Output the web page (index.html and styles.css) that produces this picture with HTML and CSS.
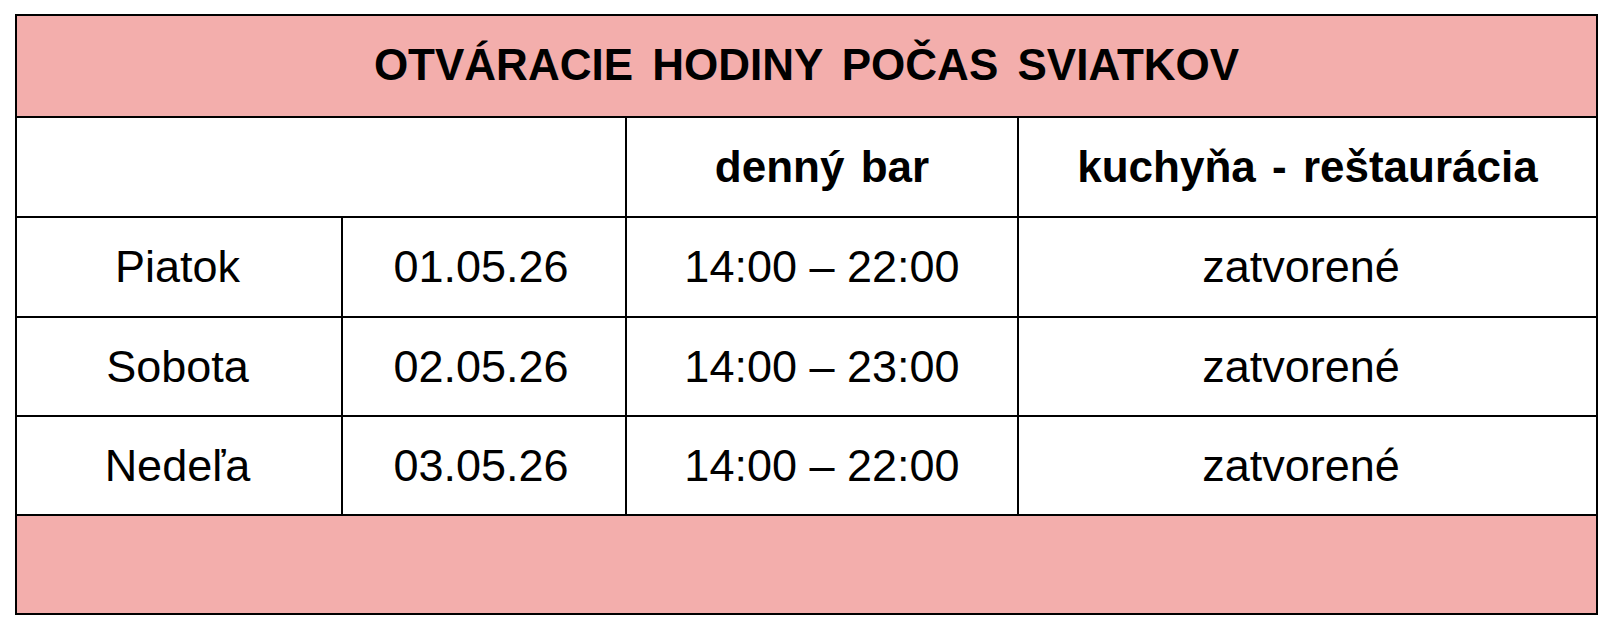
FILE: index.html
```html
<!DOCTYPE html>
<html lang="sk">
<head>
<meta charset="utf-8">
<title>Otváracie hodiny počas sviatkov</title>
<link rel="stylesheet" href="styles.css">
</head>
<body>
<div class="page">
  <div class="schedule">
    <div class="cell title span-all">OTVÁRACIE HODINY POČAS SVIATKOV</div>
    <div class="cell head span-two"></div>
    <div class="cell head">denný bar</div>
    <div class="cell head">kuchyňa - reštaurácia</div>

    <div class="cell day">Piatok</div>
    <div class="cell date">01.05.26</div>
    <div class="cell">14:00 – 22:00</div>
    <div class="cell status">zatvorené</div>

    <div class="cell day">Sobota</div>
    <div class="cell date">02.05.26</div>
    <div class="cell">14:00 – 23:00</div>
    <div class="cell status">zatvorené</div>

    <div class="cell day">Nedeľa</div>
    <div class="cell date">03.05.26</div>
    <div class="cell">14:00 – 22:00</div>
    <div class="cell status">zatvorené</div>

    <div class="cell footer span-all"></div>
  </div>
</div>
</body>
</html>
```
FILE: styles.css
```css
html, body {
  margin: 0;
  padding: 0;
  background: #ffffff;
}

.page {
  padding: 14px 0 0 15px;
}

.schedule {
  display: grid;
  width: 1583px;
  box-sizing: border-box;
  grid-template-columns: 324px 282px 390px 577px;
  grid-template-rows: 100px 98px 98px 97px 97px 97px;
  gap: 2px;
  padding: 2px;
  background: #000000;
  font-family: "Liberation Sans", Arial, sans-serif;
  color: #000000;
}

.cell {
  background: #ffffff;
  display: flex;
  align-items: center;
  justify-content: center;
  font-size: 45px;
  white-space: nowrap;
}

.span-all {
  grid-column: 1 / -1;
}

.span-two {
  grid-column: span 2;
}

.title {
  background: #f3aeac;
  font-weight: bold;
  font-size: 44px;
  word-spacing: 7px;
  padding-bottom: 3px;
}

.head {
  font-weight: bold;
  font-size: 44px;
  word-spacing: 4px;
}

.day {
  padding-right: 3px;
}

.date {
  padding-right: 6px;
}

.status {
  padding-right: 13px;
}

.footer {
  background: #f3aeac;
}
```
